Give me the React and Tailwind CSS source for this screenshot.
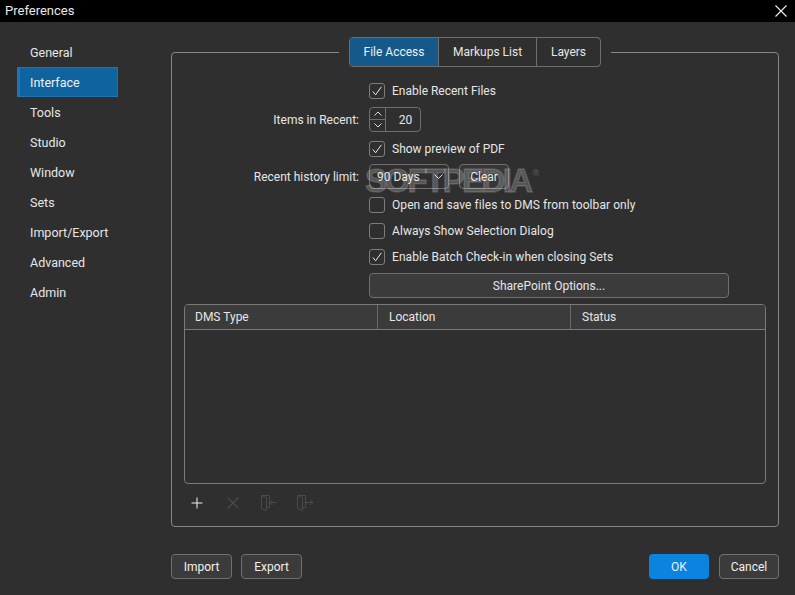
const navItems = ["General", "Interface", "Tools", "Studio", "Window", "Sets", "Import/Export", "Advanced", "Admin"];

function CheckRow({ label, checked, className = "" }) {
  return (
    <div className={`flex items-center gap-[7px] ml-[197px] ${className}`}>
      <div className="w-4 h-4 shrink-0 rounded-[3px] border border-[#7d7d7d] flex items-center justify-center">
        {checked && (
          <svg width="12" height="12" viewBox="0 0 12 12" fill="none" stroke="#e8e8e8" strokeWidth="1">
            <path d="M1.8 6.4 L4.6 9.8 L10.4 1.8" />
          </svg>
        )}
      </div>
      <span>{label}</span>
    </div>
  );
}

function FieldLabel({ children }) {
  return <span className="w-[187px] text-right shrink-0">{children}</span>;
}

function FooterButton({ children, className = "" }) {
  return (
    <button className={`h-[25px] rounded-[4px] border border-[#707070] bg-[#3b3b3b] text-[#f0f0f0] ${className}`}>
      {children}
    </button>
  );
}

function DoorIcon({ out }) {
  return (
    <svg width="18" height="18" viewBox="0 0 18 18" fill="none" stroke="#4a4a4a" strokeWidth="1">
      <path d="M1.5 1.5 H9.5 V13.5 H6.5 M1.5 1.5 V14.5 L6.5 16.5 V3.5 L1.5 1.5" />
      {out ? <path d="M10 8.5 H17 M14.5 6 L17 8.5 L14.5 11" /> : <path d="M17 8.5 H10 M12.5 6 L10 8.5 L12.5 11" />}
    </svg>
  );
}

export default function App() {
  return (
    <div className="w-[795px] h-[595px] flex flex-col bg-[#2f2f2f] text-[#e6e6e6] text-[12px] font-['Roboto',sans-serif] overflow-hidden relative">
      {/* Title bar */}
      <div className="h-[22px] bg-black flex items-center justify-between pl-[5px] pr-[8px] text-[13px] text-[#e8e8e8]">
        <span>Preferences</span>
        <svg width="12" height="12" viewBox="0 0 12 12" stroke="#f2f2f2" strokeWidth="1.1">
          <path d="M0.5 0.5 L11.5 11.5 M11.5 0.5 L0.5 11.5" />
        </svg>
      </div>

      <div className="flex-1 flex min-h-0">
        {/* Sidebar */}
        <div className="w-[171px] shrink-0 pl-[17px] pt-[15px] text-[12.5px]">
          {navItems.map((item) =>
            item === "Interface" ? (
              <div key={item} className="w-[101px] h-[30px] flex items-center pl-[10px] pt-[2px] bg-[#0f639f] border border-[#1c74b4] border-l-[3px] border-l-[#1a77bb] text-[#f0f0f0]">
                {item}
              </div>
            ) : (
              <div key={item} className="w-[101px] h-[30px] flex items-center pl-[13px] pt-[2px]">
                {item}
              </div>
            )
          )}
        </div>

        {/* Main */}
        <div className="flex-1 flex flex-col pr-[16px] pt-[30px]">
          <div className="h-[475px] rounded-[4px] border border-[#858585] flex flex-col">
            {/* Tabs */}
            <div className="flex justify-center -mt-[16px] shrink-0">
              <div className="px-[10px] bg-[#2f2f2f]">
                <div className="flex h-[30px] rounded-[4px] border border-[#6f6f6f] text-center">
                  <div className="w-[89px] flex items-center justify-center bg-[#15598a] rounded-l-[3px] border-r border-[#6f6f6f] text-[#f0f0f0]">File Access</div>
                  <div className="w-[98px] flex items-center justify-center border-r border-[#6f6f6f]">Markups List</div>
                  <div className="flex-1 w-[63px] flex items-center justify-center">Layers</div>
                </div>
              </div>
            </div>

            {/* Form */}
            <div className="flex flex-col mt-[16px]">
              <CheckRow label="Enable Recent Files" checked className="h-[16px]" />
              <div className="flex items-center h-[25px] mt-[8px]">
                <FieldLabel>Items in Recent:</FieldLabel>
                <div className="ml-[10px] w-[52px] h-[25px] flex rounded-[4px] border border-[#6f6f6f]">
                  <div className="w-[16px] flex flex-col border-r border-[#6f6f6f]">
                    <div className="flex-1 flex items-center justify-center border-b border-[#6f6f6f]">
                      <svg width="8" height="5" viewBox="0 0 8 5" fill="none" stroke="#dcdcdc"><path d="M0.5 4.5 L4 1 L7.5 4.5" /></svg>
                    </div>
                    <div className="flex-1 flex items-center justify-center">
                      <svg width="8" height="5" viewBox="0 0 8 5" fill="none" stroke="#dcdcdc"><path d="M0.5 0.5 L4 4 L7.5 0.5" /></svg>
                    </div>
                  </div>
                  <span className="flex-1 flex items-center justify-center pl-[5px]">20</span>
                </div>
              </div>
              <CheckRow label="Show preview of PDF" checked className="h-[16px] mt-[9px]" />
              <div className="flex items-center h-[25px] mt-[7px]">
                <FieldLabel>Recent history limit:</FieldLabel>
                <div className="ml-[10px] w-[80px] h-[25px] flex items-center justify-between pl-[7px] pr-[5px] rounded-[4px] border border-[#6f6f6f]">
                  <span>90 Days</span>
                  <svg width="9" height="5" viewBox="0 0 9 5" fill="none" stroke="#dcdcdc"><path d="M0.5 0.5 L4.5 4.5 L8.5 0.5" /></svg>
                </div>
                <div className="ml-[10px] w-[50px] h-[25px] flex items-center justify-center rounded-[4px] border border-[#6f6f6f] bg-[#363636]">Clear</div>
              </div>
              <CheckRow label="Open and save files to DMS from toolbar only" className="h-[16px] mt-[8px] tracking-[0.07px]" />
              <CheckRow label="Always Show Selection Dialog" className="h-[16px] mt-[10px] tracking-[0.07px]" />
              <CheckRow label="Enable Batch Check-in when closing Sets" checked className="h-[16px] mt-[10px] tracking-[0.07px]" />
              <div className="ml-[197px] mt-[8px] w-[360px] h-[25px] flex items-center justify-center rounded-[4px] border border-[#6f6f6f] bg-[#3b3b3b]">
                SharePoint Options...
              </div>
            </div>

            {/* DMS table */}
            <div className="mx-[12px] mt-[6px] h-[180px] rounded-[4px] border border-[#7a7a7a] flex flex-col overflow-hidden">
              <div className="h-[25px] flex bg-[#3b3b3b] border-b border-[#7a7a7a]">
                <div className="w-[193px] pl-[10px] flex items-center border-r border-[#6a6a6a]">DMS Type</div>
                <div className="w-[193px] pl-[11px] flex items-center border-r border-[#6a6a6a]">Location</div>
                <div className="flex-1 pl-[11px] flex items-center">Status</div>
              </div>
            </div>

            {/* Table toolbar */}
            <div className="flex items-center gap-[18px] ml-[16px] mt-[10px] h-[18px]">
              <svg width="18" height="18" viewBox="0 0 18 18" stroke="#f2f2f2" strokeWidth="1">
                <path d="M9 3.5 V14.5 M3.5 9 H14.5" />
              </svg>
              <svg width="18" height="18" viewBox="0 0 18 18" stroke="#4a4a4a" strokeWidth="1.2">
                <path d="M3.5 3.5 L14.5 14.5 M14.5 3.5 L3.5 14.5" />
              </svg>
              <DoorIcon />
              <DoorIcon out />
            </div>
          </div>

          {/* Footer */}
          <div className="flex mt-[27px]">
            <FooterButton className="w-[61px]">Import</FooterButton>
            <FooterButton className="w-[61px] ml-[9px]">Export</FooterButton>
            <button className="ml-auto w-[60px] h-[25px] rounded-[4px] bg-[#0a84e0] text-[#f0f0f0]">OK</button>
            <FooterButton className="w-[60px] ml-[10px]">Cancel</FooterButton>
          </div>
        </div>
      </div>

      {/* Softpedia watermark */}
      <div className="absolute left-[365px] top-[163px] flex items-start font-['Liberation_Sans',sans-serif] font-bold text-white/20 pointer-events-none">
        <span className="text-[33px] leading-[36px] tracking-[-2.6px] [-webkit-text-stroke:1.5px_#ffffff26]">SOFTPEDIA</span>
        <span className="text-[9px] leading-[10px] mt-[5px] ml-[2px]">®</span>
      </div>
    </div>
  );
}
